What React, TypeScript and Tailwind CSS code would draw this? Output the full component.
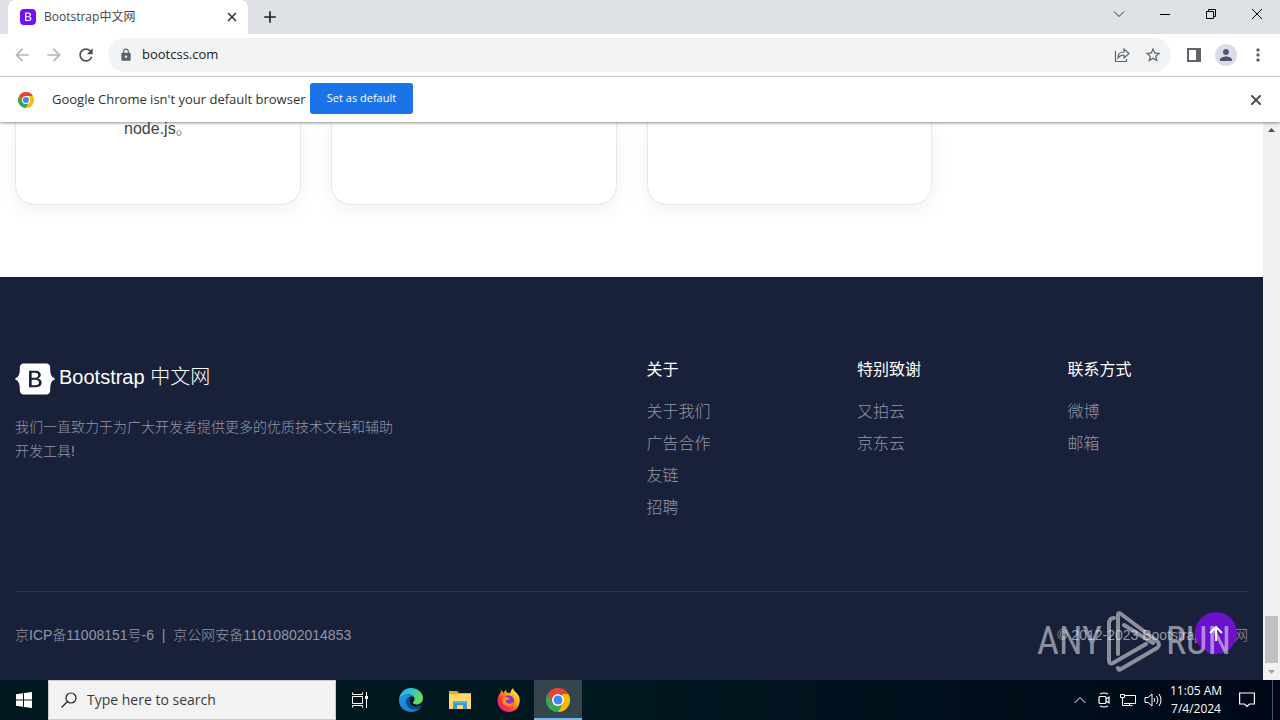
import { useState } from "react";

// icons
import {
  MdArrowBack,
  MdArrowForward,
  MdAdd,
  MdLock,
  MdMoreVert,
  MdPerson,
  MdRefresh,
  MdStarBorder,
} from "react-icons/md";
import { FaBootstrap } from "react-icons/fa6";
import { BsBootstrapFill } from "react-icons/bs";
import { X } from "lucide-react";

type LinkGroup = {
  title: string;
  links: string[];
};

const linkGroups: LinkGroup[] = [
  { title: "关于", links: ["关于我们", "广告合作", "友链", "招聘"] },
  { title: "特别致谢", links: ["又拍云", "京东云"] },
  { title: "联系方式", links: ["微博", "邮箱"] },
];

const cards = ["node.js。", "", ""];

function ChromeLogo({ className }: { className: string }) {
  return (
    <svg viewBox="0 0 48 48" className={className} aria-hidden="true">
      <path d="M3.2 12A24 24 0 0 0 24 48L34.4 30 24 24 13.6 30Z" fill="#34a853" />
      <path d="M44.8 12A24 24 0 0 1 24 48L34.4 30 32 12Z" fill="#fbbc04" />
      <path d="M24 12H44.800A24 24 0 0 0 3.200 12L13.600 30Z" fill="#ea4335" />
      <circle cx="24" cy="24" r="12" fill="#fff" />
      <circle cx="24" cy="24" r="9" fill="#4285f4" />
    </svg>
  );
}

function EdgeLogo() {
  return (
    <svg viewBox="0 0 48 48" className="size-6" aria-hidden="true">
      <defs>
        <linearGradient id="edgeTop" x1="0" y1="0" x2="1" y2="0.4">
          <stop offset="0" stopColor="#2aa5e8" />
          <stop offset="0.5" stopColor="#33c2cf" />
          <stop offset="1" stopColor="#68dc52" />
        </linearGradient>
        <linearGradient id="edgeLow" x1="0" y1="0" x2="0.8" y2="1">
          <stop offset="0" stopColor="#1f9be0" />
          <stop offset="1" stopColor="#1874c8" />
        </linearGradient>
      </defs>
      <path d="M0 25C0 11 10 0 24 0c13 0 24 9 24 20 0 8-6 13-13 13-5 0-7-2-7-4s3-3 3-7c0-5-5-9-12-9C10 13 3 18 0 25Z" fill="url(#edgeTop)" />
      <path d="M0 25c2-7 9-12 18-12 6 0 10 2 12 5-8-3-15 2-15 10 0 9 8 14 17 14 5 0 9-1 13-5-4 7-12 11-21 11C11 48 0 38 0 25Z" fill="url(#edgeLow)" />
      <path d="M18 20c-5 5-4 14 3 19 7 4 16 4 22-1 3-2 1-4-1-3-9 5-19 1-20-7-1-3 0-6 2-8-2-2-4-2-6 0Z" fill="#0f4c90" />
    </svg>
  );
}

function FirefoxLogo() {
  return (
    <svg viewBox="0 0 48 48" className="size-6" aria-hidden="true">
      <defs>
        <linearGradient id="foxBody" x1="0.9" y1="0.1" x2="0.1" y2="0.9">
          <stop offset="0" stopColor="#fff44f" />
          <stop offset="0.4" stopColor="#ff980e" />
          <stop offset="0.7" stopColor="#ff3647" />
          <stop offset="1" stopColor="#e31587" />
        </linearGradient>
      </defs>
      <path d="M6 11 9 4l4 6 4-6 4 6c3-1 5 0 6 0 0-4 2-7 5-10 1 7 9 9 12 17 5 12-3 31-20 31C10 48 1 38 1 25 1 19 3 14 6 11Z" fill="url(#foxBody)" />
      <path d="M15 17c4-3 13-3 17 2 6 8 0 17-8 17-7 0-11-6-10-11l7-1c3-1 4-3 1-4-3 0-5-1-7-3Z" fill="#8139d0" />
      <path d="M12 18c6-3 9 1 12 2 2 1 0 4-3 4-5 0-4 6 2 7 5 1 8-1 10-4 0 7-6 11-13 9C10 34 8 24 12 18Z" fill="#ff8a16" />
    </svg>
  );
}

function FolderLogo() {
  return (
    <svg viewBox="0 0 24 24" className="size-6" aria-hidden="true">
      <path d="M1 3h8l2 2h12v16H1Z" fill="#e9a72c" />
      <path d="M1 6h22v15H1Z" fill="#ffd76b" />
      <path d="M5 13h14v8h-4v-4H9v4H5Z" fill="#3c98d6" />
      <path d="M5 13h14v2H5Z" fill="#5ab2e8" />
    </svg>
  );
}

function TabStrip() {
  return (
    <header className="flex h-[34px] bg-[#dee1e6] text-[#202124]">
      <div className="ml-2 flex w-60 items-center rounded-t-lg bg-white pr-2 pl-3">
        <BsBootstrapFill className="size-4 text-[#7012f5]" />
        <span className="ml-2 grow text-xs text-[#45474a]">Bootstrap中文网</span>
        <button type="button" aria-label="Close tab" className="flex size-4 items-center justify-center">
          <X className="size-[14px] text-[#3c4043]" strokeWidth={3} />
        </button>
      </div>
      <button type="button" aria-label="New tab" className="ml-3 flex w-5 items-center justify-center">
        <MdAdd className="size-5" />
      </button>
      <div className="ml-auto flex h-7 text-black">
        <button type="button" aria-label="Search tabs" className="flex w-[46px] items-center justify-center">
          <svg viewBox="0 0 12 12" className="size-3" fill="none" stroke="#333">
            <path d="m1 3.500 5 5 5-5" />
          </svg>
        </button>
        <button type="button" aria-label="Minimize" className="flex w-[46px] items-center justify-center">
          <svg viewBox="0 0 12 12" className="size-3" fill="none" stroke="currentColor">
            <path d="M1 6.500h10" />
          </svg>
        </button>
        <button type="button" aria-label="Restore" className="flex w-[46px] items-center justify-center">
          <svg viewBox="0 0 12 12" className="size-3" fill="none" stroke="currentColor">
            <path d="M1.500 3.500h7v7h-7zM3.500 3.500v-2h7v7h-2" />
          </svg>
        </button>
        <button type="button" aria-label="Close" className="flex w-[46px] items-center justify-center">
          <svg viewBox="0 0 12 12" className="size-3" fill="none" stroke="currentColor">
            <path d="m1 1 10 10M11 1 1 11" />
          </svg>
        </button>
      </div>
    </header>
  );
}

function Toolbar() {
  const [url, setUrl] = useState<string>("bootcss.com");

  return (
    <nav className="flex h-[43px] items-center border-b border-[#dadce0] bg-white px-3 text-[#5f6368]">
      <div className="flex gap-3">
        <button type="button" aria-label="Back" className="text-[#b4b6b9]">
          <MdArrowBack className="size-5" />
        </button>
        <button type="button" aria-label="Forward" className="text-[#b4b6b9]">
          <MdArrowForward className="size-5" />
        </button>
        <button type="button" aria-label="Reload" className="text-[#4a4d51]">
          <MdRefresh className="size-5" />
        </button>
      </div>
      <div className="ml-3 flex h-[34px] grow items-center rounded-full bg-[#f1f3f4] pr-[9px] pl-[11px]">
        <MdLock className="size-[14px]" />
        <input
          type="text"
          aria-label="Address"
          value={url}
          onChange={(e) => setUrl(e.target.value)}
          className="ml-[9px] grow bg-transparent text-[13px] text-[#202124] outline-none"
        />
        <button type="button" aria-label="Share">
          <svg viewBox="0 0 16 16" className="size-4" fill="none" stroke="currentColor">
            <path d="M1.500 4v10.500h11V12M4 11c0-4 2-6 6-6V2l5 4.500-5 4.500V8c-3 0-4.500 1-6 3Z" strokeWidth="1.200" />
          </svg>
        </button>
        <button type="button" aria-label="Bookmark" className="ml-[14px]">
          <MdStarBorder className="size-[18px]" />
        </button>
      </div>
      <button type="button" aria-label="Side panel" className="ml-4">
        <svg viewBox="0 0 14 14" className="size-[14px]">
          <path d="M0 0h14v14H0ZM2 2v10h7V2Z" fill="currentColor" fillRule="evenodd" />
        </svg>
      </button>
      <button type="button" aria-label="Profile" className="ml-[14px] flex size-[22px] items-center justify-center rounded-full bg-[#dadce8] text-[#4d5570]">
        <MdPerson className="size-[18px]" />
      </button>
      <button type="button" aria-label="Menu" className="ml-[11px]">
        <MdMoreVert className="size-5" />
      </button>
    </nav>
  );
}

function DefaultBrowserBar() {
  return (
    <div className="relative z-10 flex h-[45px] items-center bg-white pr-4 pl-[18px] text-[13px] text-[#303134] shadow-[0_1px_3px_rgba(0,0,0,0.45)]">
      <ChromeLogo className="size-4" />
      <p className="ml-[18px] w-[258px] whitespace-nowrap">Google Chrome isn't your default browser</p>
      <button type="button" className="mb-[2px] h-[31px] w-[103px] rounded-[3px] bg-[#1a73e8] text-[11px] text-white">
        Set as default
      </button>
      <button type="button" aria-label="Dismiss" className="ml-auto">
        <X className="size-4 text-[#4a4d51]" strokeWidth={3} />
      </button>
    </div>
  );
}

function Footer() {
  return (
    <footer className="bg-[#19213a] pt-20 text-[#9297a6]">
      <div className="grid grid-cols-12 leading-6 font-light">
        <div className="col-span-4 px-[15px]">
          <a href="#home" className="mt-[2px] flex h-10 items-start gap-1 text-xl leading-9 font-normal text-white">
            <FaBootstrap className="size-10" />
            <span>Bootstrap <span className="font-light">中文网</span></span>
          </a>
          <p className="mt-4 text-sm leading-6">
            我们一直致力于为广大开发者提供更多的优质技术文档和辅助开发工具!
          </p>
        </div>
        {linkGroups.map((group, i) => (
          <div key={group.title} className={i === 0 ? "col-span-2 col-start-7 px-[15px]" : "col-span-2 px-[15px]"}>
            <h2 className="mt-px font-normal text-white">{group.title}</h2>
            <ul className="mt-[14px] leading-8">
              {group.links.map((link) => (
                <li key={link}>
                  <a href="#link">{link}</a>
                </li>
              ))}
            </ul>
          </div>
        ))}
      </div>
      <div className="mx-[15px] mt-[67px] flex justify-between border-t border-[#2d3449] pt-[31px] pb-[33px] text-sm leading-6 font-light">
        <p className="whitespace-pre">
          <a href="#icp">京ICP备11008151号-6</a>{"  |  "}
          <a href="#beian">京公网安备11010802014853</a>
        </p>
        <p>© 2012-2023 Bootstrap 中文网</p>
      </div>
    </footer>
  );
}

function Watermark() {
  return (
    <div className="pointer-events-none absolute right-8 bottom-2 flex items-center gap-1 font-['Roboto_Condensed','Liberation_Sans_Narrow',sans-serif] text-[38px] leading-[62px] text-white/50">
      <span>ANY</span>
      <svg viewBox="0 0 56 62" className="h-[62px] w-14" fill="none" stroke="currentColor" strokeWidth="4" strokeLinejoin="round" strokeLinecap="round">
        <path d="M12 44V5q0-3 3-1L51 31q4 4 0 7L15 59q-3 2-3-1M8 8Q3 8 3 14v36q0 5 4 3L40 34M18 15l29 18" />
      </svg>
      <span>RUN</span>
    </div>
  );
}

function Page() {
  return (
    <main className="flex grow bg-white">
      <div className="relative flex grow flex-col justify-between font-['Liberation_Sans','Noto_Sans_CJK_SC',sans-serif]">
        <section className="grid grid-cols-4">
          {cards.map((text, i) => (
            <div key={i} className="px-[15px]">
              <div className="h-[83px] rounded-b-[20px] border border-t-0 border-[#e9e9e9] bg-white text-center leading-[14px] font-light text-[#444] shadow-[0_5px_20px_rgba(0,0,0,0.06)]">
                {text}
              </div>
            </div>
          ))}
        </section>
        <Footer />
        <button type="button" aria-label="Back to top" className="absolute right-[26px] bottom-[26px] flex size-[42px] items-center justify-center rounded-full bg-[#6911cb] text-white">
          <svg viewBox="0 0 16 16" className="size-4" fill="none" stroke="currentColor" strokeWidth="2">
            <path d="M8 16V2M2 8l6-6 6 6" />
          </svg>
        </button>
        <Watermark />
      </div>
      <div className="flex w-[17px] shrink-0 flex-col items-center bg-[#f1f1f1]">
        <svg viewBox="0 0 17 17" className="size-[17px]">
          <path d="m5 10 3.500-4 3.500 4Z" fill="#505050" />
        </svg>
        <div className="mt-auto h-[47px] w-[13px] bg-[#c1c1c1]" />
        <svg viewBox="0 0 17 17" className="size-[17px]">
          <path d="m5 7 3.500 4L12 7Z" fill="#a3a3a3" />
        </svg>
      </div>
    </main>
  );
}

function Taskbar() {
  return (
    <div className="flex h-10 items-stretch bg-linear-to-r from-[#001820] via-[#001720] to-[#000817] text-white">
      <button type="button" aria-label="Start" className="flex w-12 items-center justify-center">
        <svg viewBox="0 0 16 16" className="size-4" fill="currentColor">
          <path d="M0 2.300 7 1.300v6.300H0ZM8 1.100 16 0v7.600H8ZM0 8.500h7v6.300l-7-1ZM8 8.500h8V16l-8-1.100Z" />
        </svg>
      </button>
      <label className="flex w-72 items-center gap-[10px] border border-[#c8cacb] bg-[#f2f2f2] pl-3">
        <svg viewBox="0 0 16 16" className="size-4" fill="none" stroke="#222" strokeWidth="1.200">
          <circle cx="10" cy="6" r="5" />
          <path d="M6.500 9.500.5 15.500" />
        </svg>
        <input
          type="text"
          aria-label="Search"
          placeholder="Type here to search"
          className="w-52 bg-transparent text-sm outline-none placeholder:text-[#3a3a3a]"
        />
      </label>
      <button type="button" aria-label="Task view" className="flex w-12 items-center justify-center">
        <svg viewBox="0 0 16 16" className="size-4" fill="none" stroke="currentColor">
          <path d="M.5.5v2h10v-2M.5 4.500h10v7H.5zM.5 15.500v-2h10v2M14.500 0v16" />
          <path d="M13 4h3v3h-3z" fill="currentColor" stroke="none" />
        </svg>
      </button>
      <div className="ml-[3px] flex">
        <button type="button" aria-label="Edge" className="flex w-12 items-center justify-center">
          <EdgeLogo />
        </button>
        <button type="button" aria-label="File Explorer" className="flex w-[49px] items-center justify-center">
          <FolderLogo />
        </button>
        <button type="button" aria-label="Firefox" className="flex w-[49px] items-center justify-center">
          <FirefoxLogo />
        </button>
        <button type="button" aria-label="Chrome" className="ml-px flex w-12 items-center justify-center border-b-2 border-[#76b9ed] bg-[#34454e] pt-[2px]">
          <ChromeLogo className="size-6" />
        </button>
      </div>
      <div className="ml-auto flex items-center gap-2">
        <svg viewBox="0 0 16 16" className="size-4" fill="none" stroke="currentColor">
          <path d="m2.500 11 5.500-5.500 5.500 5.500" />
        </svg>
        <svg viewBox="0 0 16 16" className="size-4" fill="none" stroke="currentColor" strokeWidth="1.200">
          <rect x="3" y="4.500" width="7" height="7" rx="1" />
          <path d="m10 7 3-2v6l-3-2M4 2q4-2 8 0M4 14q4 2 8 0" />
        </svg>
        <svg viewBox="0 0 16 16" className="size-4" fill="none" stroke="currentColor">
          <path d="M5 3.500h10.500v8H4M.5 2.500h4v3h-4zM2.500 5.500v8h10M9.500 11.500v2" />
        </svg>
        <svg viewBox="0 0 18 16" className="h-4 w-[18px]" fill="none" stroke="currentColor">
          <path d="M1 5.500h3l4-3.500v12L4 10.500H1zM10 6q1.500 2 0 4M12.500 4q3 4 0 8M15 2q4 6 0 12" />
        </svg>
        <div className="w-[52px] text-center text-xs leading-[18px] whitespace-nowrap">
          <p>11:05 AM</p>
          <p>7/4/2024</p>
        </div>
        <button type="button" aria-label="Notifications" className="flex w-[34px] items-center justify-center">
          <svg viewBox="0 0 16 16" className="size-4" fill="none" stroke="currentColor" strokeWidth="1.200">
            <path d="M.6 1h14.800v11H10.500L8 14.500 5.500 12H.6Z" />
          </svg>
        </button>
        <div className="h-full w-2 border-l border-[#4b5360]" />
      </div>
    </div>
  );
}

export default function App() {
  return (
    <div className="flex min-h-screen flex-col overflow-hidden font-['Open_Sans','Noto_Sans_CJK_SC',sans-serif]">
      <TabStrip />
      <Toolbar />
      <DefaultBrowserBar />
      <Page />
      <Taskbar />
    </div>
  );
}
